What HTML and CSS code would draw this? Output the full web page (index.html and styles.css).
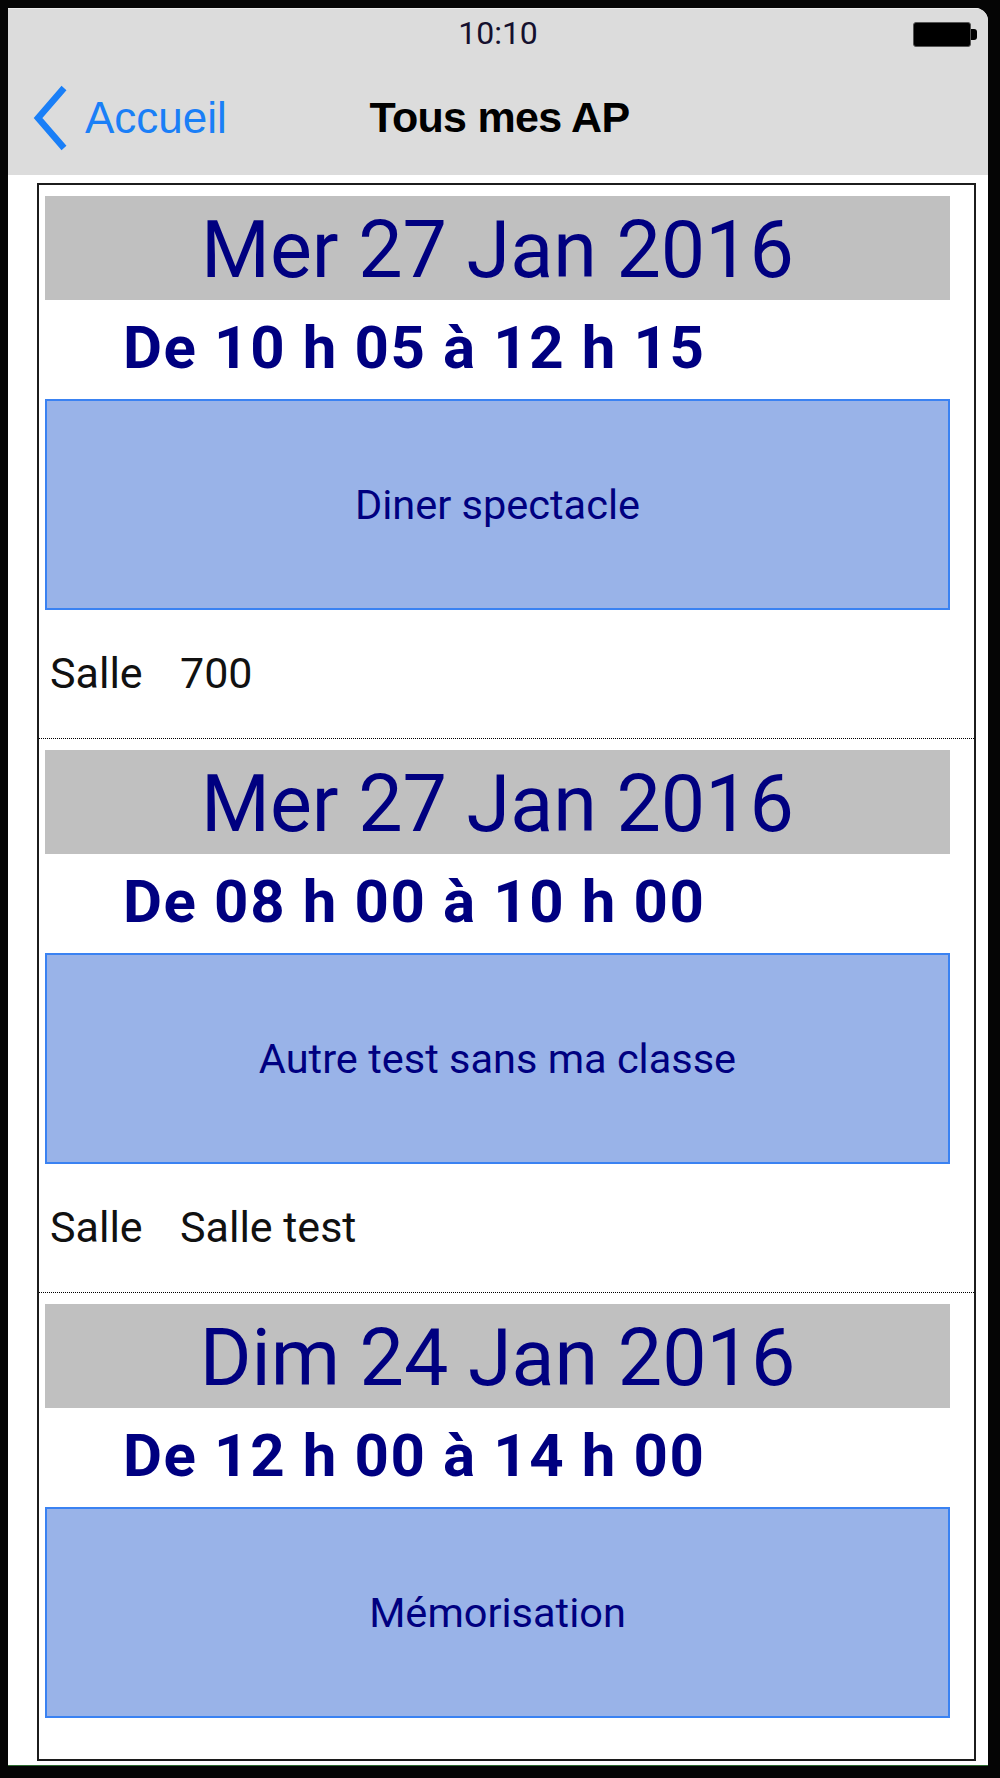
FILE: index.html
```html
<!DOCTYPE html>
<html lang="fr">
<head>
<meta charset="utf-8">
<title>Tous mes AP</title>
<link rel="stylesheet" href="styles.css">
</head>
<body>
<div class="phone">
  <div class="screen">
    <header class="topbar">
      <div class="status">
        <span></span>
        <span class="clock">10:10</span>
        <span class="battery"><span class="battery-body"></span><span class="battery-nub"></span></span>
      </div>
      <nav class="navbar">
        <a class="back">
          <svg class="chevron" width="36" height="66" viewBox="0 0 36 66"><polyline points="31,3 5,33 31,63" fill="none" stroke="#1a7ff7" stroke-width="6.5"/></svg>
          <span>Accueil</span>
        </a>
        <h1 class="title">Tous mes AP</h1>
        <span></span>
      </nav>
    </header>
    <main class="panel">
      <section class="entry">
        <div class="date">Mer 27 Jan 2016</div>
        <div class="time">De 10 h 05 à 12 h 15</div>
        <div class="activity">Diner spectacle</div>
        <div class="room"><span class="room-label">Salle</span><span>700</span></div>
      </section>
      <section class="entry">
        <div class="date">Mer 27 Jan 2016</div>
        <div class="time">De 08 h 00 à 10 h 00</div>
        <div class="activity">Autre test sans ma classe</div>
        <div class="room"><span class="room-label">Salle</span><span>Salle test</span></div>
      </section>
      <section class="entry last">
        <div class="date">Dim 24 Jan 2016</div>
        <div class="time">De 12 h 00 à 14 h 00</div>
        <div class="activity">Mémorisation</div>
      </section>
    </main>
  </div>
</div>
</body>
</html>
```
FILE: styles.css
```css
html, body {
  margin: 0;
  padding: 0;
  background: #000;
}
body {
  width: 1000px;
  height: 1778px;
  overflow: hidden;
  font-family: Roboto, "Noto Sans", sans-serif;
}
.phone {
  box-sizing: border-box;
  width: 1000px;
  height: 1778px;
  background: #050505;
  padding: 8px 12px 12px 8px;
  display: flex;
}
.screen {
  flex: 1;
  background: #fff;
  border-top-right-radius: 13px;
  border-bottom: 1px solid #2c6a30;
  display: flex;
  flex-direction: column;
  overflow: hidden;
}
.topbar {
  height: 167px;
  background: #dcdcdc;
  border-top: 1px solid #ececec;
  box-sizing: border-box;
  display: flex;
  flex-direction: column;
  flex: none;
}
.status {
  height: 51px;
  display: grid;
  grid-template-columns: 1fr auto 1fr;
  align-items: start;
}
.clock {
  font-family: Roboto, sans-serif;
  font-size: 32px;
  line-height: 32px;
  color: #15102e;
  padding-top: 8px;
}
.battery {
  justify-self: end;
  margin-right: 11px;
  margin-top: 13px;
  display: flex;
  align-items: center;
}
.battery-body {
  width: 58px;
  height: 25px;
  box-sizing: border-box;
  background: #000;
  border: 1px solid #555;
  border-radius: 3px;
}
.battery-nub {
  width: 6px;
  height: 11px;
  background: #000;
  border-radius: 0 3px 3px 0;
}
.navbar {
  flex: 1;
  display: grid;
  grid-template-columns: 1fr auto 1fr;
  align-items: center;
  font-family: "Liberation Sans", Arial, sans-serif;
}
.back {
  display: flex;
  align-items: center;
  gap: 16px;
  margin-left: 25px;
  color: #1a7ff7;
  font-size: 44px;
  text-decoration: none;
}
.chevron {
  display: block;
}
.title {
  margin: 0 0 0 3px;
  font-size: 43px;
  font-weight: bold;
  letter-spacing: -0.7px;
  color: #000;
}
.panel {
  flex: 1;
  margin: 8px 12px 4px 29px;
  border: 2px solid #1c1c1c;
  overflow: hidden;
  min-height: 0;
}
.entry {
  padding: 11px 24px 0 6px;
  border-bottom: 1px dotted #000;
}
.entry.last {
  border-bottom: none;
}
.date {
  height: 104px;
  background: #c0c0c0;
  color: #000080;
  font-size: 79px;
  line-height: 108px;
  text-align: center;
}
.time {
  height: 99px;
  color: #000080;
  font-size: 60px;
  font-weight: bold;
  letter-spacing: 1.6px;
  line-height: 95px;
  padding-left: 78px;
}
.activity {
  height: 211px;
  box-sizing: border-box;
  background: #99b3e8;
  border: 2px solid #3a82f2;
  color: #000080;
  font-size: 41.5px;
  display: flex;
  align-items: center;
  justify-content: center;
}
.room {
  height: 128px;
  display: flex;
  align-items: center;
  padding-left: 5px;
  padding-bottom: 2px;
  box-sizing: border-box;
  font-size: 43px;
  color: #111;
}
.room-label {
  width: 130px;
}
```
